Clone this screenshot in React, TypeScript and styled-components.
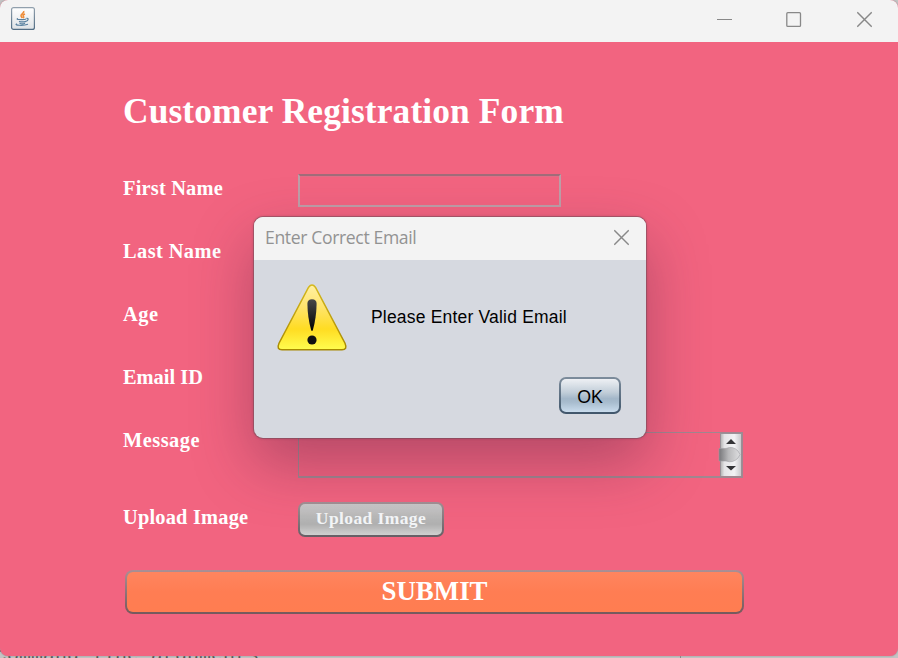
import React from "react";
import styled, { createGlobalStyle } from "styled-components";

const GlobalStyle = createGlobalStyle`
  * { box-sizing: border-box; }
  body { margin: 0; background: #c4c4c4; overflow: hidden; }
`;

const Desktop = styled.div`
  position: relative;
  width: 898px;
  height: 658px;
  overflow: hidden;
  background: #c4c4c4;
`;

const EditorLine = styled.div`
  position: absolute;
  left: -5px;
  top: 645px;
  width: 686px;
  border-right: 1px solid #8a8a8a;
  font: 20px/22px "Liberation Mono", monospace;
  color: #555;
  white-space: pre;
`;

const Window = styled.div`
  position: relative;
  height: 656px;
  border-radius: 8px;
  overflow: hidden;
  background: #f26480;
  box-shadow: 0 0 2px #8d8d8d;
`;

const TitleBar = styled.header`
  display: flex;
  align-items: flex-start;
  justify-content: space-between;
  height: 42px;
  padding: 7px 26px 0 11px;
  background: #f3f3f3;
`;

const WindowControls = styled.div`
  display: flex;
  gap: 54px;
  padding-top: 4px;
  svg { display: block; }
`;

const Form = styled.main`
  display: flex;
  flex-direction: column;
  padding: 48px 154px 0 123px;
  font-family: "Liberation Serif", "Times New Roman", serif;
  font-weight: 700;
  color: #fff;
`;

const Heading = styled.h1`
  margin: 0 0 41px;
  font-size: 35.4px;
  line-height: 42px;
  letter-spacing: 0.12px;
  white-space: nowrap;
`;

const Row = styled.div<{ $height?: number }>`
  display: grid;
  grid-template-columns: 175px auto;
  justify-content: start;
  align-items: start;
  height: ${({ $height }) => $height ?? 63}px;
`;

const Label = styled.label<{ $tracking?: number }>`
  font-size: 20.4px;
  line-height: 24px;
  padding-top: 3px;
  letter-spacing: ${({ $tracking }) => $tracking ?? 0.2}px;
  white-space: nowrap;
`;

const TextField = styled.input`
  width: 263px;
  height: 33px;
  margin-top: 1px;
  border: 2px solid #bd9fa8;
  border-top: 2px solid #a16c79;
  background: transparent;
  box-shadow: inset 0 1px 0 #e07088;
  outline: none;
`;

const MessageBox = styled.div`
  display: flex;
  justify-content: flex-end;
  width: 445px;
  height: 46px;
  margin-top: 7px;
  border: 1px solid #a08790;
  border-bottom-width: 2px;
`;

const UploadButton = styled.button`
  width: 146px;
  height: 35px;
  margin-top: 0;
  padding: 0 0 3px;
  border: 2px solid transparent;
  border-radius: 7px;
  background:
    linear-gradient(#c9c9c9, #b6b6b6 48%, #b0b0b0 65%, #d0d0d0) padding-box,
    linear-gradient(#a39296, #665f65) border-box;
  color: #f4f6f8;
  font: 700 17.5px "Liberation Serif", serif;
  letter-spacing: 0.4px;
`;

const SubmitButton = styled.button`
  width: 619px;
  height: 44px;
  margin-left: 2px;
  padding: 0 0 2px;
  border: 2px solid transparent;
  border-radius: 8px;
  background:
    linear-gradient(#ff855f, #ff7d53 50%, #ff7d51) padding-box,
    linear-gradient(#ab8f94, #75595c) border-box;
  color: #fff;
  font: 700 26.9px "Liberation Serif", serif;
`;

const Dialog = styled.section`
  position: absolute;
  left: 254px;
  top: 217px;
  width: 392px;
  height: 221px;
  border-radius: 9px;
  background: #d6d9e0;
  box-shadow:
    0 0 0 1px rgba(110, 80, 90, 0.45),
    0 0 3px rgba(80, 40, 50, 0.45),
    0 25px 60px rgba(80, 30, 60, 0.38);
`;

const DialogTitle = styled.header`
  display: flex;
  align-items: flex-start;
  justify-content: space-between;
  height: 43px;
  padding: 8px 17px 0 11px;
  border-radius: 9px 9px 0 0;
  background: #f3f3f3;
  color: #929292;
  font: 17.6px/24px "Open Sans", "Segoe UI", sans-serif;
  letter-spacing: -0.37px;
`;

const DialogClose = styled.div`
  padding-top: 4px;
  svg { display: block; }
`;

const DialogContent = styled.div`
  display: flex;
  gap: 23px;
  height: 117px;
  padding: 23px 0 0 22px;
`;

const DialogMessage = styled.p`
  margin: 23px 0 0;
  color: #000;
  font: 17.5px/22px "Liberation Sans", Arial, sans-serif;
  letter-spacing: 0.19px;
  white-space: nowrap;
`;

const OkButton = styled.button`
  display: block;
  width: 62px;
  height: 37px;
  margin: 0 25px 0 auto;
  padding: 3px 0 0;
  border: 2px solid transparent;
  border-radius: 7px;
  background:
    linear-gradient(#eef0f4, #c2ced9 40%, #a2b6c8 60%, #a9bdcf 72%, #c9dced) padding-box,
    linear-gradient(#7d8c9c, #40566b) border-box;
  color: #000;
  font: 17.8px "Liberation Sans", Arial, sans-serif;
`;

function JavaIcon() {
  return (
    <svg width="24" height="23" viewBox="0 0 24 23" fill="none">
      <defs>
        <linearGradient id="tile" x2="0" y2="1">
          <stop stopColor="#fff" />
          <stop offset="1" stopColor="#dfe3e6" />
        </linearGradient>
        <linearGradient id="edge" x2="0" y2="1">
          <stop stopColor="#91a0ad" />
          <stop offset="1" stopColor="#526d84" />
        </linearGradient>
      </defs>
      <rect x=".6" y=".6" width="22.8" height="21.8" rx="2" fill="url(#tile)" stroke="url(#edge)" strokeWidth="1.2" />
      <path d="M12.7 4c1 2-3.3 3-2.7 4.9.2.8 1 1.4 1.2 2.2M14 6.9c-2.4.8-2.1 2-1.5 2.7.4.5.2 1.1-.3 1.5" stroke="#ee8d39" strokeWidth="1.6" />
      <path d="M7 11.5c-1.7.6-.5 1 1.1 1 3 .2 6 0 7-.5M8 14.4c2 .7 5 .6 7 0M8.5 16.3c1.5.6 4 .6 5.5 0M15.4 11.4c2.5-.6 2.3 2.2-.6 3.1M6 16.7c-4 1.6 6 2.3 11 .6" stroke="#58809f" strokeWidth="1.2" />
    </svg>
  );
}

function CloseIcon() {
  return (
    <svg width="15" height="17" viewBox="0 0 15 17" fill="none" stroke="#888" strokeWidth="1.3">
      <path d="M.3 1.3l14.4 14.4M14.7 1.3L.3 15.7" />
    </svg>
  );
}

function WarningIcon() {
  return (
    <svg width="72" height="70" viewBox="0 0 72 70">
      <defs>
        <linearGradient id="warning" x2="0" y2="1">
          <stop stopColor="#fff0a4" />
          <stop offset=".35" stopColor="#ffe46a" />
          <stop offset=".68" stopColor="#ffdc22" />
          <stop offset="1" stopColor="#fffd4f" />
        </linearGradient>
        <linearGradient id="warningEdge" x2="0" y2="1">
          <stop stopColor="#d5b81c" />
          <stop offset="1" stopColor="#a88900" />
        </linearGradient>
        <linearGradient id="mark" x2="0" y2="1">
          <stop stopColor="#484848" />
          <stop offset="1" stopColor="#000" />
        </linearGradient>
      </defs>
      <path d="M32.6 4.2Q36 -.2 39.4 4.2L69 60.2Q71.8 66.8 66 66.8H6Q.2 66.8 3 60.2Z" fill="url(#warning)" stroke="url(#warningEdge)" strokeWidth="1.5" />
      <path d="M31.4 20.8Q31.4 16.3 36 16.3T40.6 20.8Q40.4 35 36.8 47.3Q36 48.6 35.2 47.3Q31.6 35 31.4 20.8Z" fill="url(#mark)" />
      <circle cx="36" cy="57" r="4.6" fill="#111" />
    </svg>
  );
}

function Scroller() {
  return (
    <svg width="24" height="43" viewBox="0 0 24 43">
      <defs>
        <linearGradient id="track" x2="1">
          <stop stopColor="#aaa" />
          <stop offset=".2" stopColor="#e4e4e6" />
          <stop offset=".65" stopColor="#f2f2f4" />
          <stop offset="1" stopColor="#c4c4c7" />
        </linearGradient>
        <linearGradient id="thumb" x2="1">
          <stop stopColor="#77777a" />
          <stop offset=".45" stopColor="#b8b8ba" />
          <stop offset="1" stopColor="#dedee0" />
        </linearGradient>
      </defs>
      <path d="M2 0H24V43H2Z" fill="url(#track)" />
      <path d="M2.5 0V43M23.5 0V43M2 .5H24" stroke="#999197" fill="none" />
      <path d="M1 15.5H8Q15 12.5 20 18L22 21.5 20 25Q15 30.5 8 28H1Z" fill="url(#thumb)" stroke="#a0a0a4" strokeWidth=".6" />
      <path d="M8 11L13 6 18 11ZM8 33L13 37.5 18 33Z" fill="#343437" />
    </svg>
  );
}

export default function App() {
  return (
    <>
      <GlobalStyle />
      <Desktop>
        <EditorLine>command line arguments</EditorLine>
        <Window>
          <TitleBar>
            <JavaIcon />
            <WindowControls>
              <svg width="15" height="17" viewBox="0 0 15 17" stroke="#888"><path d="M0 8.5h15" /></svg>
              <svg width="17" height="17" viewBox="0 0 17 17" fill="none" stroke="#888" strokeWidth="1.3"><rect x=".8" y="1.7" width="13.7" height="13.7" rx="1" /></svg>
              <CloseIcon />
            </WindowControls>
          </TitleBar>
          <Form>
            <Heading>Customer Registration Form</Heading>
            <Row><Label>First Name</Label><TextField /></Row>
            <Row><Label $tracking={0.42}>Last Name</Label><TextField /></Row>
            <Row><Label $tracking={0.6}>Age</Label><TextField /></Row>
            <Row><Label $tracking={0}>Email ID</Label><TextField /></Row>
            <Row $height={77}><Label $tracking={0.47}>Message</Label><MessageBox><Scroller /></MessageBox></Row>
            <Row $height={68}><Label>Upload Image</Label><UploadButton>Upload Image</UploadButton></Row>
            <SubmitButton>SUBMIT</SubmitButton>
          </Form>
          <Dialog>
            <DialogTitle>
              Enter Correct Email
              <DialogClose><CloseIcon /></DialogClose>
            </DialogTitle>
            <DialogContent>
              <WarningIcon />
              <DialogMessage>Please Enter Valid Email</DialogMessage>
            </DialogContent>
            <OkButton>OK</OkButton>
          </Dialog>
        </Window>
      </Desktop>
    </>
  );
}
